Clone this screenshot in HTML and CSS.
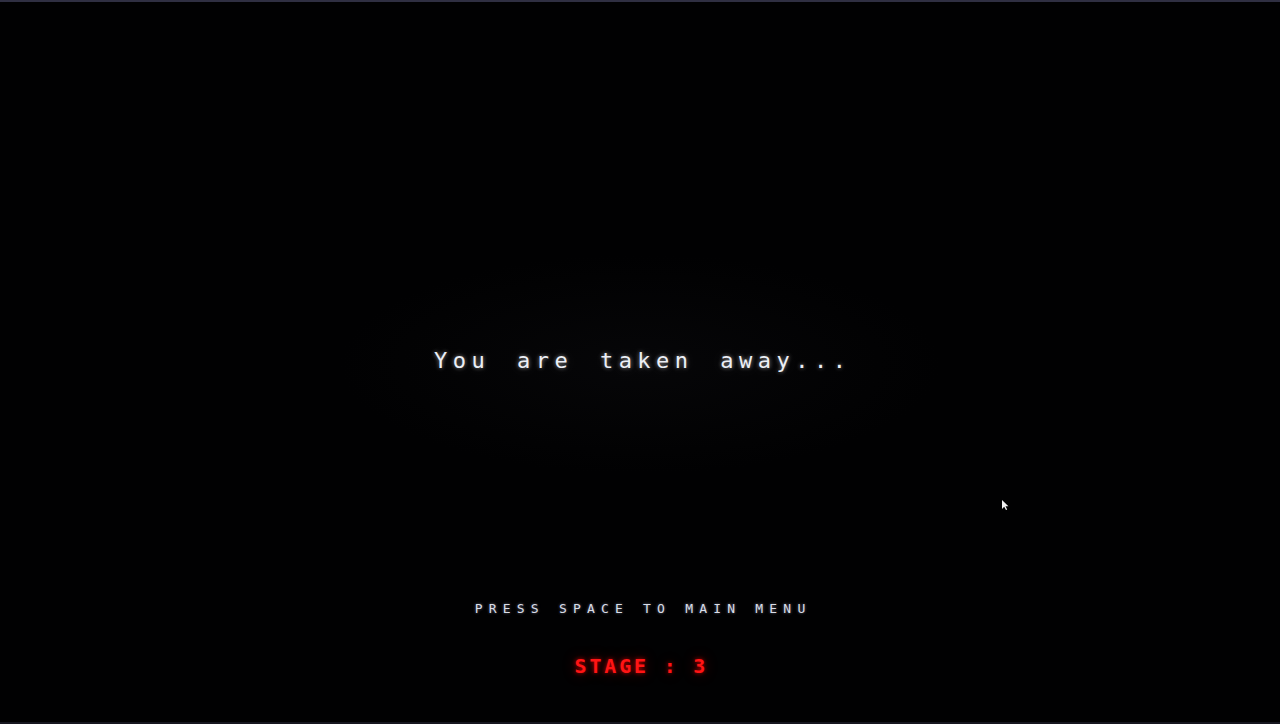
FILE: index.html
```html
<!DOCTYPE html>
<html>
<head>
<meta charset="utf-8">
<title>Game Over</title>
<link rel="stylesheet" href="styles.css">
</head>
<body>
<div class="screen">
  <div class="message">You are taken away...</div>
  <div class="prompt">PRESS SPACE TO MAIN MENU</div>
  <div class="stage">STAGE : 3</div>

  <!-- mouse pointer left over the canvas -->
  <svg class="pointer" width="8" height="12" viewBox="0 0 8 12">
    <path d="M1 1 L1 10 L3.2 7.8 L5 11 L6.2 10.4 L4.5 7.3 L7.4 7.2 Z" fill="#f2f2f2"/>
  </svg>
</div>
</body>
</html>
```

FILE: styles.css
```css
html, body {
  margin: 0;
  padding: 0;
  background: #000000;
}

.screen {
  position: relative;
  box-sizing: border-box;
  width: 1280px;
  height: 724px;
  padding-top: 346px;
  display: flex;
  flex-direction: column;
  align-items: center;
  background: radial-gradient(ellipse 300px 110px at 640px 362px, #060608 0%, #020203 80%, #010102 100%);
  border-top: 2px solid #2f2f42;
  border-bottom: 2px solid #16161f;
  font-family: "DejaVu Sans Mono", "Liberation Mono", monospace;
}

.message {
  font-size: 22px;
  line-height: 26px;
  letter-spacing: 5.5px;
  word-spacing: 8px;
  margin-right: -5.5px;
  color: #eceff6;
  text-shadow: 0 0 4px rgba(255, 255, 255, 0.55), 0 0 22px rgba(255, 255, 255, 0.18);
}

.prompt {
  margin-top: 227px;
  font-size: 13px;
  line-height: 16px;
  letter-spacing: 6.2px;
  margin-right: -6.2px;
  color: #d9dde8;
  text-shadow: 0 0 3px rgba(220, 225, 255, 0.5), 0 0 14px rgba(255, 255, 255, 0.12);
}

.stage {
  margin-top: 37px;
  font-size: 20px;
  font-weight: bold;
  line-height: 24px;
  letter-spacing: 2.8px;
  margin-right: -2.8px;
  color: #ff1414;
  text-shadow: 0 0 4px rgba(255, 0, 0, 0.7), 0 0 14px rgba(255, 0, 0, 0.35);
}

.pointer {
  position: absolute;
  left: 1001px;
  top: 497px;
}
```
